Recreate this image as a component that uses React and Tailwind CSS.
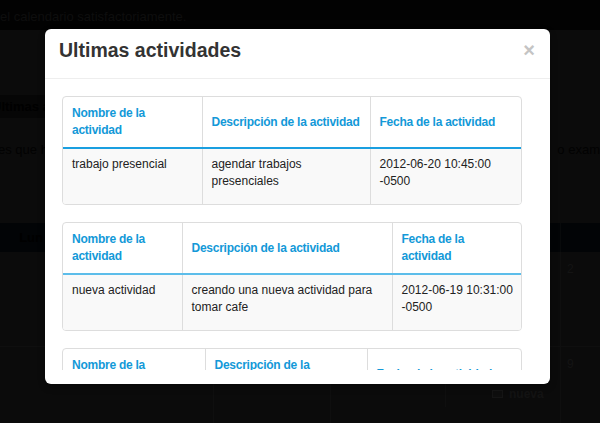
import React from 'react';

const tables = [
  {
    widths: [139, 168, 153],
    line: 'border-[#1a9fe0]',
    row: ['trabajo presencial', 'agendar trabajos presenciales', '2012-06-20 10:45:00 -0500'],
  },
  {
    widths: [119, 210, 131],
    line: 'border-[#5cbdea]',
    row: ['nueva actividad', 'creando una nueva actividad para tomar cafe', '2012-06-19 10:31:00 -0500'],
  },
  {
    widths: [142, 162, 156],
    line: 'border-[#1a9fe0]',
    row: ['reunion', 'revisar el calendario', '2012-06-18 09:00:00 -0500'],
  },
];

const heads = ['Nombre de la actividad', 'Descripción de la actividad', 'Fecha de la actividad'];

function ActivityTable({ widths, line, row }) {
  return (
    <div className="mb-[17px] rounded-[4px] border border-[#dddddd] overflow-hidden">
      <table className="w-full table-fixed border-collapse text-[12px] leading-[17px]">
        <colgroup>
          {widths.map((w, i) => (
            <col key={i} style={{ width: w }} />
          ))}
        </colgroup>
        <thead>
          <tr>
            {heads.map((h, i) => (
              <th
                key={h}
                className={`h-[49px] px-[9px] py-2 text-left align-middle font-bold tracking-[-0.25px] text-[#1399d8] border-b-2 ${line} ${i > 0 ? 'border-l border-l-[#dddddd]' : ''}`}
              >
                {h}
              </th>
            ))}
          </tr>
        </thead>
        <tbody>
          <tr className="bg-[#f9f9f9]">
            {row.map((c, i) => (
              <td
                key={i}
                className={`px-[9px] pt-[7px] pb-[14px] h-[56px] align-top text-[#222222] ${i > 0 ? 'border-l border-[#dddddd]' : ''}`}
              >
                {c}
              </td>
            ))}
          </tr>
        </tbody>
      </table>
    </div>
  );
}

function BackgroundPage() {
  return (
    <div className="w-[600px] h-[423px] bg-[#0b0b0b] overflow-hidden">
      <div className="h-[30px] bg-[#020202] pt-[9px] text-[13px] leading-[16px] text-[#0e0e0e] whitespace-nowrap">
        el calendario satisfactoriamente.
      </div>
      <div className="mt-[65px] h-[23px] w-[45px] bg-[#060606] overflow-hidden whitespace-nowrap text-[13px] font-bold leading-[23px] text-[#000000] -indent-[8px]">
        Ultimas act
      </div>
      <div className="mt-[24px] flex justify-between whitespace-nowrap text-[13px] leading-[16px] text-[#020202]">
        <span className="-ml-[2px]">es que h</span>
        <span>o exam</span>
      </div>
      <div className="mt-[65px] h-[29px] bg-[#020406] flex">
        <div className="w-[45px] text-right pr-[2px] text-[13px] font-bold leading-[29px] text-[#000000]">Lun</div>
        <div className="flex-1" />
        <div className="w-[40px] border-l border-[#080a0b]" />
      </div>
      <div className="flex h-[95px] border-b border-[#0f0f0f]">
        <div className="w-[213px]" />
        <div className="w-[117px] border-l border-[#0f0f0f]" />
        <div className="w-[115px] border-l border-[#0f0f0f]" />
        <div className="w-[115px] border-l border-[#0f0f0f]" />
        <div className="flex-1 border-l border-[#0f0f0f] pl-[6px] pt-[8px] text-[12px] text-[#141414]">2</div>
      </div>
      <div className="flex h-[95px]">
        <div className="w-[213px]" />
        <div className="w-[117px] border-l border-[#0f0f0f]" />
        <div className="w-[115px] border-l border-[#0f0f0f]" />
        <div className="w-[115px] border-l border-[#0f0f0f] pt-[33px] pl-[46px] flex items-center gap-[6px] h-[60px]">
          <span className="inline-block w-[11px] h-[8px] border border-[#151515] bg-[#0e0e0e]" />
          <span className="text-[12px] font-bold text-[#131313]">nueva</span>
        </div>
        <div className="flex-1 border-l border-[#0f0f0f] pl-[6px] pt-[8px] text-[12px] text-[#141414]">9</div>
      </div>
    </div>
  );
}

export default function App() {
  return (
    <div className="relative w-[600px] h-[423px] overflow-hidden font-['Liberation_Sans',Arial,sans-serif]">
      <BackgroundPage />
      <div className="absolute left-[45px] top-[29px] w-[505px] h-[355px] bg-white rounded-[6px] shadow-[0_3px_7px_rgba(0,0,0,0.3)] flex flex-col">
        <div className="h-[50px] border-b border-[#eeeeee] pl-[14px] pr-[15px] pb-[8px] flex items-center justify-between">
          <h3 className="text-[19.5px] font-bold text-[#333333] leading-[22px]">Ultimas actividades</h3>
          <button type="button" className="text-[20px] font-bold leading-[20px] text-[#c4c4c4]">
            ×
          </button>
        </div>
        <div className="h-[291px] overflow-hidden pl-[17px] pr-[28px] pt-[17px]">
          {tables.map((t, i) => (
            <ActivityTable key={i} {...t} />
          ))}
        </div>
      </div>
    </div>
  );
}
